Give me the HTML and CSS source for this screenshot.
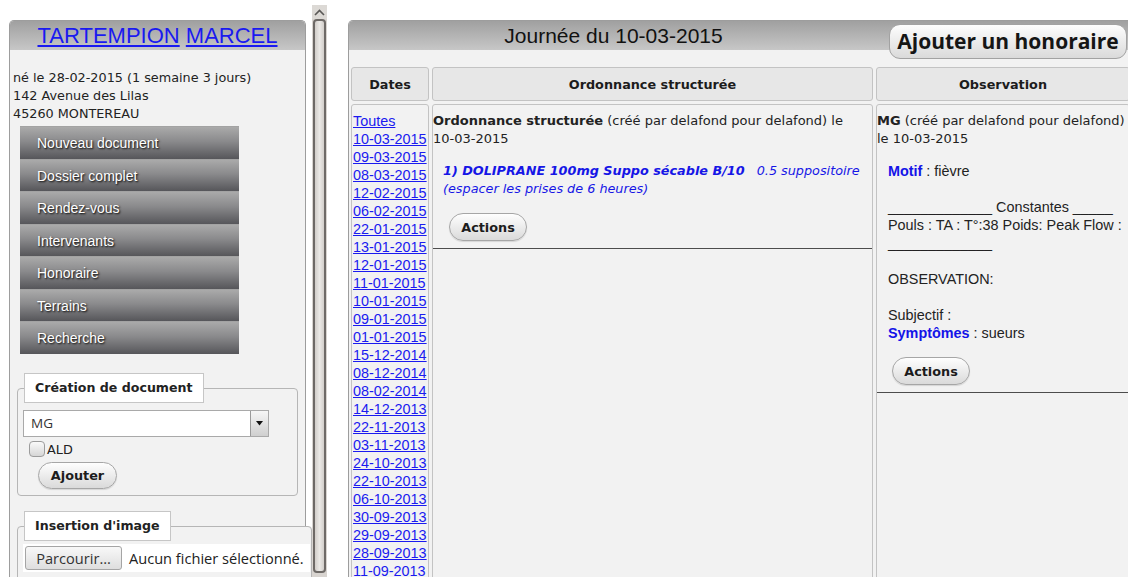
FILE: index.html
```html
<!DOCTYPE html>
<html lang="fr">
<head>
<meta charset="utf-8">
<title>Dossier patient</title>
<link rel="stylesheet" href="styles.css">
</head>
<body>
<div class="page">
  <aside class="left">
    <div class="phead"><a href="#">TARTEMPION</a> <a href="#">MARCEL</a></div>
    <div class="info">né le 28-02-2015 (1 semaine 3 jours)<br>142 Avenue des Lilas<br>45260 MONTEREAU</div>
    <nav class="menu">
      <a href="#">Nouveau document</a>
      <a href="#">Dossier complet</a>
      <a href="#">Rendez-vous</a>
      <a href="#">Intervenants</a>
      <a href="#">Honoraire</a>
      <a href="#">Terrains</a>
      <a href="#">Recherche</a>
    </nav>
    <fieldset class="fs fs1">
      <legend>Création de document</legend>
      <div class="select"><span class="sval">MG</span><span class="sarrow"><svg width="7" height="5" viewBox="0 0 7 5"><polygon points="0,0 7,0 3.5,4.5" fill="#111"/></svg></span></div>
      <label class="chk"><span class="box"></span>ALD</label>
      <button class="pill add">Ajouter</button>
    </fieldset>
    <fieldset class="fs fs2">
      <legend>Insertion d'image</legend>
      <div class="file"><span class="browse">Parcourir…</span><span class="nofile">Aucun fichier sélectionné.</span></div>
    </fieldset>
  </aside>

  <div class="vscroll">
    <div class="sup"><svg width="11" height="7" viewBox="0 0 11 7"><polyline points="1,6 5.5,1.5 10,6" fill="none" stroke="#5a5856" stroke-width="1.6"/></svg></div>
    <div class="thumb"></div>
  </div>

  <main class="right">
    <div class="rhead">
      <div class="rtitle">Journée du 10-03-2015</div>
      <button class="honor">Ajouter un honoraire</button>
    </div>
    <div class="grid">
      <div class="th">Dates</div>
      <div class="th">Ordonnance structurée</div>
      <div class="th">Observation</div>

      <div class="td dates">
        <a href="#">Toutes</a>
        <a href="#">10-03-2015</a>
        <a href="#">09-03-2015</a>
        <a href="#">08-03-2015</a>
        <a href="#">12-02-2015</a>
        <a href="#">06-02-2015</a>
        <a href="#">22-01-2015</a>
        <a href="#">13-01-2015</a>
        <a href="#">12-01-2015</a>
        <a href="#">11-01-2015</a>
        <a href="#">10-01-2015</a>
        <a href="#">09-01-2015</a>
        <a href="#">01-01-2015</a>
        <a href="#">15-12-2014</a>
        <a href="#">08-12-2014</a>
        <a href="#">08-02-2014</a>
        <a href="#">14-12-2013</a>
        <a href="#">22-11-2013</a>
        <a href="#">03-11-2013</a>
        <a href="#">24-10-2013</a>
        <a href="#">22-10-2013</a>
        <a href="#">06-10-2013</a>
        <a href="#">30-09-2013</a>
        <a href="#">29-09-2013</a>
        <a href="#">28-09-2013</a>
        <a href="#">11-09-2013</a>
        <a href="#">02-09-2013</a>
      </div>

      <div class="td doc">
        <div class="dhead"><b>Ordonnance structurée</b> (créé par delafond pour delafond) le <span class="nw">10-03-2015</span></div>
        <div class="drug"><b>1) DOLIPRANE 100mg Suppo sécable B/10</b><span class="dose">0.5 suppositoire</span> (espacer les prises de 6 heures)</div>
        <button class="pill act">Actions</button>
        <hr class="sep">
      </div>

      <div class="td doc obs">
        <div class="dhead"><b>MG</b> (créé par delafond pour delafond) le <span class="nw">10-03-2015</span></div>
        <div class="obody">
          <b class="kw">Motif</b> : fièvre<br><br>
          _____________ Constantes _____<br>
          Pouls : TA : T°:38 Poids: Peak Flow :<br>
          _____________<br><br>
          OBSERVATION:<br><br>
          Subjectif :<br>
          <b class="kw">Symptômes</b> : sueurs
        </div>
        <button class="pill act act2">Actions</button>
        <hr class="sep">
      </div>
    </div>
  </main>
</div>
</body>
</html>
```

FILE: styles.css
```css
* { box-sizing: border-box; }

html, body {
  margin: 0;
  padding: 0;
  height: 577px;
  overflow: hidden;
  background: #fff;
}

body {
  font-family: "DejaVu Sans", sans-serif;
  font-size: 12.8px;
  color: #222;
}

.page {
  display: flex;
  align-items: flex-start;
  width: 1140px;
}

/* ---------- left panel ---------- */
.left {
  flex: none;
  margin: 20px 0 0 9px;
  width: 297px;
  height: 620px;
  background: #f2f2f2;
  border: 1px solid #9d9d9d;
  border-bottom: 0;
  border-radius: 5px 5px 0 0;
}

.phead {
  height: 29px;
  border-radius: 4px 4px 0 0;
  background: linear-gradient(#a0a0a0, #c7c7c7);
  text-align: center;
  font-family: "Liberation Sans", Arial, sans-serif;
  font-size: 22px;
  line-height: 29px;
}

.phead a { color: #1a1af0; text-decoration: underline; }

.info {
  margin-top: 19px;
  padding-left: 3px;
  line-height: 18px;
  color: #222;
}

.menu {
  margin: 3px 0 0 10px;
  width: 219px;
}

.menu a {
  display: block;
  height: 32.5px;
  line-height: 32px;
  padding-left: 17px;
  font-family: "Liberation Sans", Arial, sans-serif;
  font-size: 14px;
  color: #fff;
  text-decoration: none;
  text-shadow: 1px 1px 2px #000;
  background: linear-gradient(#aaaaaa, #8a8a8c 45%, #56565a);
  border-top: 1px solid #a3a3a3;
}

.fs {
  margin: 19.5px 0 0 7px;
  padding: 0 5px 6px;
  border: 1px solid #b6b6b6;
  border-radius: 4px;
  min-width: 0;
}

.fs1 { width: 281px; }

.fs2 {
  margin-top: 15px;
  width: 295px;
  padding-right: 1px;
  height: 80px;
  background: #f2f2f2;
  position: relative;
}

.fs legend {
  margin-left: 1px;
  padding: 0 10px;
  height: 30px;
  line-height: 28px;
  background: #fff;
  border: 1px solid #c6c6c6;
  font-weight: bold;
  font-size: 12.6px;
  color: #222;
}

.select {
  margin-top: 7px;
  width: 246px;
  height: 27px;
  display: flex;
  align-items: stretch;
  background: #fff;
  border: 1px solid #a9a9a9;
}

.sval {
  flex: 1;
  padding-left: 7px;
  font-family: "Open Sans", sans-serif;
  font-size: 13.5px;
  line-height: 25px;
  color: #333;
}

.sarrow {
  width: 18px;
  display: flex;
  align-items: center;
  justify-content: center;
  background: linear-gradient(#f6f6f6, #cfcfcf);
  border-left: 1px solid #9a9a9a;
}

.chk {
  margin: 4px 0 0 6px;
  height: 16px;
  display: flex;
  align-items: center;
  gap: 2px;
  font-size: 12.8px;
  color: #222;
}

.box {
  width: 16px;
  height: 16px;
  border: 1px solid #9c9c9c;
  border-radius: 4px;
  background: linear-gradient(#fafafa, #d6d6d6);
}

.pill {
  display: block;
  padding: 0;
  font-family: "DejaVu Sans", sans-serif;
  font-weight: bold;
  font-size: 12.8px;
  color: #1c1c1c;
  border: 1px solid #a6a6a6;
  border-radius: 14px;
  background: linear-gradient(#fefefe, #dadada);
  box-shadow: 0 1px 1px rgba(0, 0, 0, 0.12);
}

.add {
  margin: 5px 0 0 15px;
  width: 79px;
  height: 27px;
}

.file {
  margin-top: 3px;
  width: 287px;
  height: 28px;
  display: flex;
  align-items: center;
  gap: 7px;
  padding-left: 2px;
  background: #fff;
  font-family: "Open Sans", sans-serif;
  font-size: 14.6px;
  color: #222;
  white-space: nowrap;
}

.browse {
  width: 97px;
  height: 24px;
  line-height: 22px;
  text-align: center;
  border: 1px solid #a5a5a5;
  border-radius: 3px;
  background: linear-gradient(#f8f8f8, #dedede);
  color: #333;
}

/* ---------- scrollbar ---------- */
.vscroll {
  flex: none;
  margin: 5px 0 0 6px;
  width: 15px;
  height: 580px;
  background: #d8d4d0;
}

.sup {
  height: 14px;
  display: flex;
  align-items: center;
  justify-content: center;
  background: #dcd9d5;
}

.thumb {
  margin: 0 1px;
  height: 554px;
  border: 2px solid #6e6a67;
  border-radius: 4px;
  background: linear-gradient(to right, #d2ceca, #ebe9e6 50%, #d2ceca);
}

/* ---------- right panel ---------- */
.right {
  flex: none;
  margin: 20px 0 0 21px;
  width: 785px;
  height: 620px;
  background: #f2f2f2;
  border: 1px solid #9d9d9d;
  border-bottom: 0;
  border-radius: 5px 5px 0 0;
}

.rhead {
  display: flex;
  align-items: flex-start;
  height: 29px;
  border-radius: 4px 4px 0 0;
  background: linear-gradient(#a0a0a0, #c7c7c7);
}

.rtitle {
  flex: 1;
  padding-right: 11px;
  text-align: center;
  font-family: "Liberation Sans", Arial, sans-serif;
  font-size: 21px;
  line-height: 30px;
  color: #111;
}

.honor {
  flex: none;
  margin: 3px 5px 0 0;
  width: 238px;
  height: 35px;
  padding: 0;
  border: 1px solid #a2a2a2;
  border-radius: 11px;
  background: linear-gradient(#fdfdfd, #dadada);
  font-family: "Open Sans", sans-serif;
  font-weight: 700;
  font-size: 21px;
  line-height: 31px;
  color: #151515;
  position: relative;
}

.grid {
  display: grid;
  grid-template-columns: 78px 441px 1fr;
  gap: 3px;
  margin-top: 17px;
  padding: 0 2px;
}

.th {
  height: 34px;
  display: flex;
  align-items: center;
  justify-content: center;
  font-weight: bold;
  color: #1c1c1c;
  background: #e7e7e7;
  border: 1px solid #c3c3c3;
  border-radius: 3px;
}

.td {
  height: 480px;
  padding-top: 7px;
  background: #f2f2f2;
  border: 1px solid #c3c3c3;
  border-radius: 3px;
}

.dates { padding-left: 1px; }

.dates a {
  display: block;
  font-family: "Liberation Sans", Arial, sans-serif;
  font-size: 14.4px;
  line-height: 18px;
  color: #1a1af0;
}

.dhead {
  line-height: 18px;
  font-size: 13px;
  color: #222;
}

.nw { white-space: nowrap; }

.drug {
  margin-top: 14px;
  padding-left: 10px;
  line-height: 18px;
  font-style: italic;
  color: #1616e6;
}

.dose { margin-left: 12px; }

.act {
  margin: 15px 0 0 16px;
  width: 78px;
  height: 28px;
}

.act2 { margin-left: 15px; }

.sep {
  margin: 7px 0 0;
  height: 0;
  border: 0;
  border-top: 1px solid #4d4d4d;
}

.obody {
  margin-top: 14px;
  padding-left: 11px;
  font-family: "Liberation Sans", Arial, sans-serif;
  font-size: 14.4px;
  line-height: 18px;
  white-space: nowrap;
  color: #222;
}

.kw { color: #1414e8; }
```
